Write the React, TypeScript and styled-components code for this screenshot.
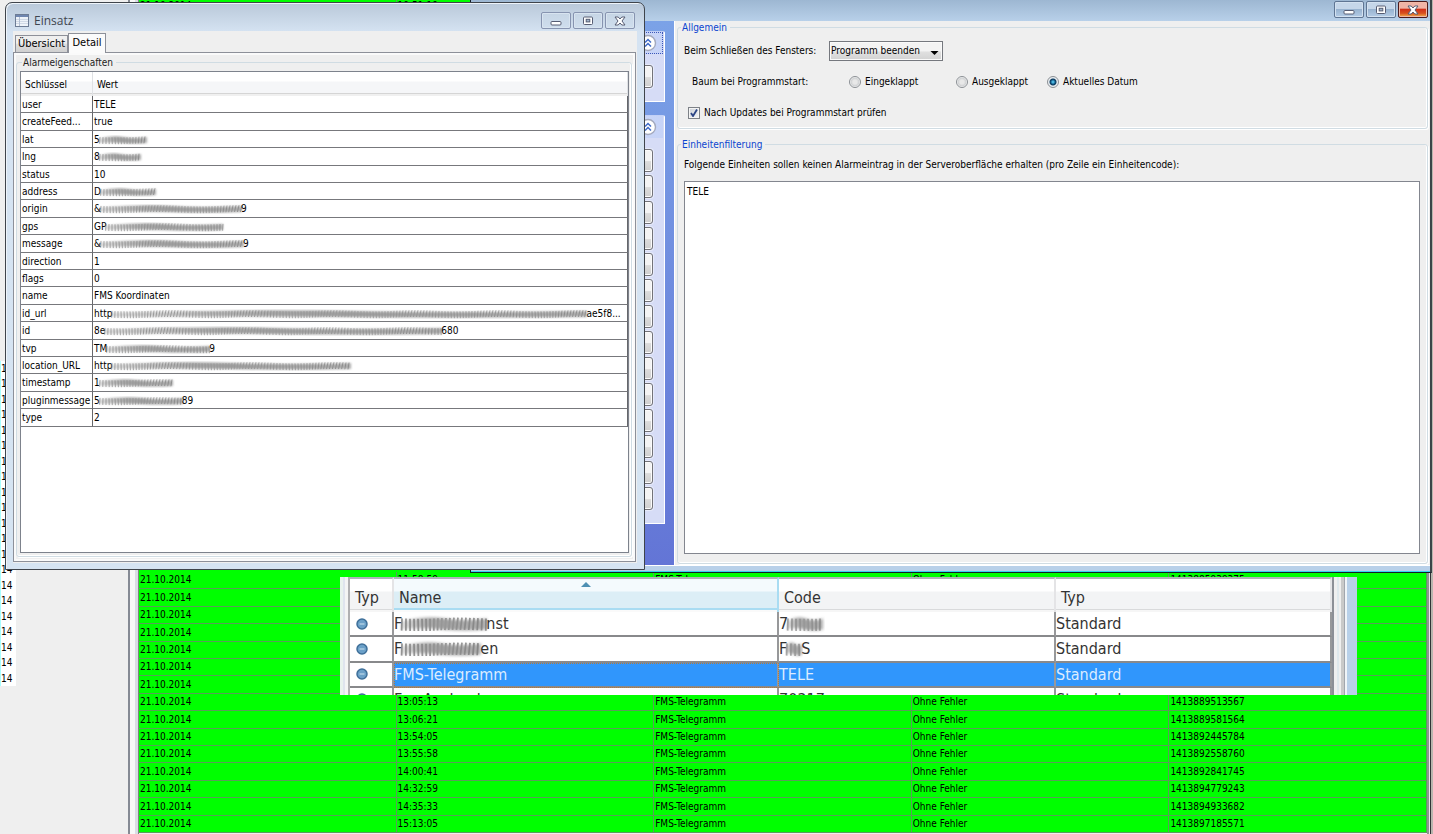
import React from 'react';
import styled, { createGlobalStyle, css } from 'styled-components';

const GlobalStyle = createGlobalStyle`
  *, *::before, *::after { box-sizing: border-box; }
  body {
    margin: 0;
    background: #efefef;
    color: #000;
    font: 10px/14px "DejaVu Sans Condensed", "DejaVu Sans", Tahoma, sans-serif;
  }
  button, input, select, textarea { font: inherit; color: inherit; margin: 0; }
`;

const Desktop = styled.main`
  position: relative;
  display: flex;
  height: 100vh;
  overflow: hidden;
`;

/* ---------- background application ---------- */

const TreePane = styled.aside`
  flex: none;
  width: 128px;
  padding-top: 361px;
`;

const TreeList = styled.ul`
  list-style: none;
  margin: 0;
  padding: 0;
  width: 16px;
  background: #fff;
  border-left: 1px solid #a8ffff;
`;

const TreeItem = styled.li`
  height: 15px;
  line-height: 15px;
  &:nth-child(2n) { height: 16px; }
`;

const Splitter = styled.div`
  flex: none;
  width: 10px;
  border-left: 2px solid #858a94;
  background: linear-gradient(to right, #f8f8f8 0 5px, #d9dde3 5px 8px);
`;

const LogPane = styled.section`
  flex: 1;
  min-width: 0;
  border-left: 1px solid #7d837d;
  margin-top: -3px;
`;

const RightEdge = styled.div`
  flex: none;
  width: 6px;
  background: linear-gradient(to right, #8f9490 0 2px, #e8e8e8 2px 3px, #303436 3px 4px, #b9b6ae 4px 6px);
`;

const LogTable = styled.table`
  width: 100%;
  table-layout: fixed;
  border-collapse: separate;
  border-spacing: 0;
  background: #00ff00;
`;

const LogCell = styled.td`
  padding: 0 1px;
  height: 17px;
  line-height: 14px;
  white-space: nowrap;
  overflow: hidden;
  border-bottom: 1px solid #5b9c5b;
  border-right: 1px solid #5b9c5b;
`;

const LogRow = styled.tr`
  &:nth-child(5n + 1) > td,
  &:nth-child(5n + 4) > td { height: 18px; }
`;

const LogSpacer = styled.td`
  height: 557px;
  padding: 0;
`;

/* ---------- window chrome ---------- */

const windowButton = css`
  display: flex;
  align-items: center;
  justify-content: center;
  width: 30px;
  height: 17px;
  padding: 0;
  border-radius: 2px;
`;

const WindowButton = styled.button<{ $look: 'active' | 'inactive' | 'close' }>`
  ${windowButton}
  ${p => p.$look === 'inactive' && css`
    border: 1px solid #8794b0;
    background: linear-gradient(#c6d5e5, #cfdeed);
    box-shadow: inset 0 0 0 1px #d8e4f0;
  `}
  ${p => p.$look === 'active' && css`
    border: 1px solid #5f7593;
    background: linear-gradient(#c5d6e9 0 45%, #98b3d0 50%, #b4cce6);
    box-shadow: inset 0 0 0 1px #d3e1f0;
  `}
  ${p => p.$look === 'close' && css`
    border: 1px solid #4b1a1c;
    background: linear-gradient(#f0b3a6 0 40%, #d0321a 50%, #d8501f 75%, #f3b64e);
    box-shadow: inset 0 0 0 1px #f1b9a8;
  `}
`;

const ButtonStrip = styled.div`
  display: flex;
  gap: 2px;
  margin-left: auto;
`;

const MinimizeIcon = () => (
  <svg width="12" height="12" viewBox="0 0 12 12">
    <rect x="1" y="6.500" width="10" height="3.500" rx="1" fill="#fff" stroke="#565c72" />
  </svg>
);
const MaximizeIcon = () => (
  <svg width="12" height="12" viewBox="0 0 12 12">
    <rect x="1.500" y="2" width="9" height="7.500" rx="1" fill="#fff" stroke="#565c72" />
    <rect x="4.200" y="4.300" width="3.600" height="2.600" fill="#9fb4cc" stroke="#565c72" />
  </svg>
);
const CloseIcon = () => (
  <svg width="12" height="12" viewBox="0 0 12 12">
    <path d="M1 2h3.200L6 4l1.800-2H11L8 6l3 4H7.800L6 8l-1.800 2H1l3-4z" fill="#fff" stroke="#565c72" strokeLinejoin="round" />
  </svg>
);

const WindowControls = ({ active }: { active?: boolean }) => (
  <ButtonStrip>
    <WindowButton type="button" aria-label="Minimieren" $look={active ? 'active' : 'inactive'}><MinimizeIcon /></WindowButton>
    <WindowButton type="button" aria-label="Maximieren" $look={active ? 'active' : 'inactive'}><MaximizeIcon /></WindowButton>
    <WindowButton type="button" aria-label="Schließen" $look={active ? 'close' : 'inactive'}><CloseIcon /></WindowButton>
  </ButtonStrip>
);

/* ---------- settings window ---------- */

const SettingsWindow = styled.section`
  position: absolute;
  left: 470px;
  right: 1px;
  top: 0;
  background: #b8d0e9;
  border: 1px solid #141c24;
  border-width: 0 2px 1px 1px;
  border-right-color: #3b4548;
`;

const SettingsTitle = styled.header`
  display: flex;
  height: 21px;
  padding: 1px 2px 3px 8px;
  background: linear-gradient(#9db7d2, #b8d0e9);
`;

const SettingsBody = styled.div`
  display: flex;
  border-bottom: 1px solid #fff;
`;

const SettingsBottom = styled.div`
  height: 6px;
  border-bottom: 1px solid #35d4f3;
`;

const TaskPane = styled.nav`
  flex: none;
  width: 203px;
  padding: 10px 9px 0 12px;
  display: flex;
  flex-direction: column;
  gap: 13px;
  background: linear-gradient(#7ba2e7, #6375d6);
`;

const TaskGroup = styled.section`
  border: 1px solid #fff;
  border-top-color: #c3d0f6;
  border-radius: 2px 2px 0 0;
  background: #d6dcf6;
`;

const TaskHeader = styled.header<{ $focused?: boolean }>`
  display: flex;
  justify-content: flex-end;
  align-items: center;
  height: 22px;
  padding: 0 6px 0 0;
  margin: 0 1px 0 0;
  background: linear-gradient(to right, #e8edfc, #c6d3f7);
  outline: ${p => (p.$focused ? '1px dotted #3b56b8' : 'none')};
  outline-offset: -1px;
`;

const ChevronButton = styled.button`
  width: 18px;
  height: 18px;
  padding: 0;
  border: 0;
  background: none;
  & > svg { display: block; }
`;

const TaskButtons = styled.div`
  display: flex;
  flex-direction: column;
  gap: 3px;
  padding: 11px 11px 13px;
`;

const TaskButton = styled.button`
  height: 23px;
  padding: 0;
  border: 1px solid #737378;
  border-radius: 3px;
  background: linear-gradient(#f4f4f4 0 50%, #dcdcdc 55%, #cfcfcf);
  box-shadow: inset 0 0 0 1px #fbfbfb, 0 0 0 1px #e6eafa;
`;

const Chevrons = () => (
  <svg width="18" height="18" viewBox="0 0 18 18">
    <circle cx="9" cy="9" r="7.500" fill="#fff" stroke="#a3a9bd" strokeWidth="1.400" />
    <path d="M6 8.500l3-3 3 3M6 12.500l3-3 3 3" fill="none" stroke="#3f6bc8" strokeWidth="1.500" />
  </svg>
);

const SettingsPane = styled.form`
  flex: 1;
  min-width: 0;
  display: flex;
  flex-direction: column;
  gap: 9px;
  padding: 0 2px 1px;
  background: #efefef;
  border-left: 1px solid #fff;
`;

const Group = styled.fieldset`
  margin: 0;
  min-width: 0;
  padding: 0 7px 0 6px;
  border: 1px solid #d0dce3;
  border-radius: 3px;
  box-shadow: inset 0 -1px 0 #fff, inset -1px 0 0 #fff, 1px 1px 0 #fff;
`;

const Legend = styled.legend<{ $accent?: boolean }>`
  padding: 0 3px 0 1px;
  margin-left: -3px;
  line-height: 13px;
  color: ${p => (p.$accent ? '#0b45d0' : '#222')};
`;

const FormRow = styled.div<{ $indent?: boolean }>`
  display: flex;
  align-items: center;
  height: 31px;
  padding-left: ${p => (p.$indent ? '8px' : '0')};
`;

const FormRows = styled.div`
  padding-top: 1px;
`;

const RowLabel = styled.label`
  width: 145px;
`;

const RadioCaption = styled.span`
  width: 157px;
`;

const SelectBox = styled.div`
  position: relative;
  width: 114px;
  & > svg { position: absolute; right: 4px; top: 9px; pointer-events: none; }
`;

const Select = styled.select`
  appearance: none;
  display: block;
  width: 100%;
  height: 20px;
  padding: 0 0 0 1px;
  border: 1px solid #75787e;
  border-radius: 0;
  background: linear-gradient(#f3f3f3 0 50%, #e0e0e0 55%, #d2d2d2);
  box-shadow: inset 0 0 0 1px #fafafa;
`;

const RadioLabel = styled.label<{ $width: number }>`
  display: flex;
  align-items: center;
  gap: 4px;
  width: ${p => p.$width}px;
`;

const Radio = styled.input`
  appearance: none;
  width: 12px;
  height: 12px;
  border: 1px solid #8b8f94;
  border-radius: 50%;
  background: radial-gradient(circle, #e8e8e8 0 2px, #cfd1d3 4px, #fafafa 5px);
  &:checked {
    background: radial-gradient(circle at 50% 50%, #49b4dd 0 1px, #145d8c 2px, #0d3a5c 3px, #e9eef2 4px);
  }
`;

const CheckLabel = styled.label`
  display: flex;
  align-items: center;
  gap: 4px;
  padding-left: 4px;
`;

const CheckWrap = styled.span`
  position: relative;
  display: flex;
  & > svg { position: absolute; left: 2px; top: 2px; pointer-events: none; }
`;

const Checkbox = styled.input`
  appearance: none;
  width: 12px;
  height: 12px;
  border: 1px solid #7d8187;
  background: linear-gradient(135deg, #ccd1d8, #f4f5f7);
  box-shadow: inset 0 0 0 1px #f4f4f4;
`;

const FilterLabel = styled.label`
  display: block;
  padding: 7px 0 9px;
`;

const FilterArea = styled.textarea`
  display: block;
  width: 100%;
  height: 373px;
  margin-bottom: 9px;
  padding: 3px 2px;
  border: 1px solid #83868f;
  border-radius: 0;
  background: #fff;
  resize: none;
  outline: none;
`;

/* ---------- detail window ---------- */

const DetailWindow = styled.section`
  position: absolute;
  left: 5px;
  top: 2px;
  width: 640px;
  padding: 0 7px 6px;
  border: 1px solid #3f444b;
  border-radius: 7px 7px 0 0;
  background: linear-gradient(#b9c8d9, #d5e3f2 29px, #d6e4f2);
  box-shadow: inset 1px 1px 0 #eef4fa;
`;

const DetailTitle = styled.header`
  display: flex;
  align-items: flex-start;
  height: 28px;
  padding: 9px 2px 0;
`;

const Title = styled.h1`
  margin: 0 0 0 5px;
  font: 12px/17px "Open Sans", "Segoe UI", sans-serif;
  color: #3f4650;
`;

const AppIcon = () => (
  <svg width="14" height="17" viewBox="0 0 14 17">
    <rect x=".5" y="2.500" width="13" height="12" fill="#eef3f9" stroke="#6d7c95" />
    <path d="M1 4h12" stroke="#6f86b0" strokeWidth="2" />
    <path d="M1 7.500h12M1 9.500h12M1 11.500h12" stroke="#d0d9e6" />
    <path d="M4.500 5v9" stroke="#b3c0d4" />
  </svg>
);

const Client = styled.div`
  background: #efefef;
  padding: 2px 1px 1px 0;
`;

const TabList = styled.div`
  display: flex;
  align-items: flex-end;
  padding-left: 2px;
`;

const Tab = styled.button<{ $selected?: boolean }>`
  position: relative;
  padding: 0 4px;
  height: 17px;
  border: 1px solid #8d9099;
  border-bottom: 0;
  background: linear-gradient(#efefef 0 45%, #dedede 50%, #d0d0d0);
  font-size: 11px;
  width: 53px;
  white-space: nowrap;
  display: flex;
  justify-content: center;
  align-items: center;
  ${p => p.$selected && css`
    height: 20px;
    width: 38px;
    margin-bottom: -1px;
    padding-bottom: 2px;
    background: #fbfbfb;
  `}
`;

const TabPanel = styled.div`
  border: 1px solid #8d9099;
  padding: 3px 3px 4px 2px;
  box-shadow: inset 0 0 0 2px #fafafa;
`;

const DetailGroup = styled(Group)`
  padding: 2px 2px 3px 3px;
  & > legend { margin-left: 2px; }
`;

const ScrollPane = styled.div`
  min-height: 482px;
  border: 1px solid #7d828c;
  background: #fff;
`;

const PropertyTable = styled.table`
  width: 100%;
  table-layout: fixed;
  border-collapse: separate;
  border-spacing: 0;
`;

const PropertyHead = styled.th`
  height: 24px;
  padding: 2px 4px 0;
  font-weight: normal;
  text-align: left;
  border-right: 1px solid #dfe1e4;
  background: linear-gradient(#fff 0 9px, #f5f6f8 10px 21px, #d5d5d5 21px 22px, #f0f0f0 22px);
`;

const PropertyCell = styled.td`
  height: 17px;
  padding: 1px 1px 0;
  line-height: 14px;
  white-space: nowrap;
  overflow: hidden;
  text-overflow: ellipsis;
  border-bottom: 1px solid #77787c;
  border-right: 1px solid #66676b;
`;

const PropertyRow = styled.tr`
  &:nth-child(5n + 2) > td,
  &:nth-child(5n + 4) > td { height: 18px; }
`;

const ValueLine = styled.div`
  display: flex;
  align-items: center;
  height: 14px;
`;

const SmearSvg = styled.svg`
  flex: none;
  margin-left: -3px;
  margin-right: -3px;
`;

/* Grey wiped-over area that hides private values. */
const Smear = ({ width, height = 10, dark = false }: { width: number; height?: number; dark?: boolean }) => {
  const id = React.useId();
  const mid = height / 2;
  const step = height > 12 ? 4 : 3;
  const strokes: string[] = [];
  for (let x = 3; x < width - 1; x += step) {
    const wobble = Math.sin(x / 13);
    const top = height * 0.18 + wobble * 0.6;
    strokes.push(`M${x} ${top.toFixed(1)}l${(-0.6 + wobble).toFixed(1)} ${(height * 0.68).toFixed(1)}`);
  }
  const half = height * 0.3;
  return (
    <SmearSvg width={width} height={height} viewBox={`0 0 ${width} ${height}`} aria-hidden="true">
      <defs>
        <filter id={`${id}b`} x="-5%" y="-60%" width="110%" height="220%">
          <feGaussianBlur stdDeviation={height / 12} />
        </filter>
        <linearGradient id={`${id}g`}>
          <stop offset="0" stopColor="#777" stopOpacity=".25" />
          <stop offset=".3" stopColor="#888" stopOpacity=".7" />
          <stop offset=".5" stopColor="#999" stopOpacity=".95" />
          <stop offset=".7" stopColor="#8a8a8a" stopOpacity=".75" />
          <stop offset="1" stopColor="#777" stopOpacity=".6" />
        </linearGradient>
      </defs>
      <path d={strokes.join('')} stroke={dark ? '#444' : '#666'} strokeWidth={height / 10} opacity=".55" fill="none" />
      <path
        d={`M2 ${mid - half * 0.5}Q${width * 0.3} ${mid - half * 1.6} ${width * 0.5} ${mid - half}T${width - 2} ${mid - half}V${mid + half}Q${width * 0.75} ${mid + half * 1.4} ${width * 0.5} ${mid + half}T2 ${mid + half}z`}
        fill={`url(#${id}g)`}
        filter={`url(#${id}b)`}
      />
    </SmearSvg>
  );
};

/* ---------- enlarged unit list ---------- */

const UnitPanel = styled.section`
  position: absolute;
  left: 340px;
  top: 577px;
  width: 1017px;
  height: 118px;
  overflow: hidden;
  display: flex;
  color: #333;
  font-size: 16px;
  background: #fff;
`;

const PanelEdge = styled.div<{ $side: 'left' | 'right' }>`
  flex: none;
  ${p => p.$side === 'left'
    ? css`width: 10px; background: linear-gradient(to right, #e9f2ee 0 3px, #dfe4ee 3px 5px, #f4f4f4 5px 8px, #b0b0b2 8px 10px);`
    : css`width: 25px; background: linear-gradient(to right, #8c8f96 0 2px, #efefef 2px 5px, #dfe8ec 5px 7px, #efefef 7px 9px, #c9c9c9 9px 12px, #a2a6ad 12px 13px, #f0f4f8 13px 15px, #b8d0e9 15px);`}
`;

const UnitTable = styled.table`
  flex: 1;
  table-layout: fixed;
  border-collapse: separate;
  border-spacing: 0;
  height: 136px;
`;

const UnitHead = styled.th<{ $sorted?: boolean }>`
  position: relative;
  height: 35px;
  padding: 4px 5px 0;
  text-align: left;
  font-weight: normal;
  line-height: 20px;
  border-top: 2px solid #aeb4b8;
  border-right: 2px solid #e4e4e6;
  background: linear-gradient(#fff 0 12px, #f3f4f5 13px 30px, #d9dadb 30px 31px, #f6f6f6 31px);
  ${p => p.$sorted && css`
    border-right-color: #a9dcf2;
    background: linear-gradient(#f4fafd 0 12px, #dceef6 13px 29px, #a9dcf2 29px 31px, #fafafa 31px);
  `}
  & > svg { position: absolute; left: 50%; top: 2px; margin-left: -5px; }
`;

const UnitCell = styled.td<{ $selected?: boolean; $focus?: boolean; $icon?: boolean }>`
  height: 25px;
  padding: ${p => (p.$icon ? '0 0 0 6px' : '0')};
  line-height: 23px;
  white-space: nowrap;
  border-bottom: 2px solid #88898b;
  border-right: 2px solid #97989a;
  ${p => p.$selected && css`
    background: #3096fc;
    color: #dcecff;
  `}
  ${p => p.$focus && css`
    outline: 1px dotted #b57a3a;
    outline-offset: -1px;
  `}
`;

const UnitValue = styled.div`
  display: flex;
  align-items: center;
  height: 23px;
`;

const DotSvg = styled.svg`
  display: block;
`;

const TypeDot = () => (
  <DotSvg width="12" height="12" viewBox="0 0 12 12">
    <circle cx="6" cy="6" r="5" fill="#6ba0c8" stroke="#3e6f99" strokeWidth="1.500" />
    <path d="M3.500 6h5" stroke="#a9cbe2" strokeWidth="1.600" />
  </DotSvg>
);

/* ---------- data ---------- */

type LogEntry = [string, string, string, string, string];
const day = '21.10.2014';
const log = (time: string, stamp: string): LogEntry => [day, time, 'FMS-Telegramm', 'Ohne Fehler', stamp];
const bare: LogEntry = [day, '', '', '', ''];

const logEntries: LogEntry[] = [
  log('11:58:59', '1413885939375'),
  bare, bare, bare, bare, bare, bare,
  log('13:05:13', '1413889513567'),
  log('13:06:21', '1413889581564'),
  log('13:54:05', '1413892445784'),
  log('13:55:58', '1413892558760'),
  log('14:00:41', '1413892841745'),
  log('14:32:59', '1413894779243'),
  log('14:35:33', '1413894933682'),
  log('15:13:05', '1413897185571'),
];

type Property = { key: string; head: string; smear?: number; tail?: string };
const properties: Property[] = [
  { key: 'user', head: 'TELE' },
  { key: 'createFeed...', head: 'true' },
  { key: 'lat', head: '5', smear: 52 },
  { key: 'lng', head: '8', smear: 46 },
  { key: 'status', head: '10' },
  { key: 'address', head: 'D', smear: 60 },
  { key: 'origin', head: '&', smear: 146, tail: '9' },
  { key: 'gps', head: 'GP', smear: 122 },
  { key: 'message', head: '&', smear: 148, tail: '9' },
  { key: 'direction', head: '1' },
  { key: 'flags', head: '0' },
  { key: 'name', head: 'FMS Koordinaten' },
  { key: 'id_url', head: 'http', smear: 480, tail: 'ae5f8...' },
  { key: 'id', head: '8e', smear: 342, tail: '680' },
  { key: 'tvp', head: 'TM', smear: 108, tail: '9' },
  { key: 'location_URL', head: 'http', smear: 244 },
  { key: 'timestamp', head: '1', smear: 78 },
  { key: 'pluginmessage', head: '5', smear: 88, tail: '89' },
  { key: 'type', head: '2' },
];

const LogLine = ({ entry }: { entry: LogEntry }) => (
  <LogRow>{entry.map((text, i) => <LogCell key={i}>{text}</LogCell>)}</LogRow>
);

export default function App() {
  return (
    <>
      <GlobalStyle />
      <Desktop>
        <TreePane>
          <TreeList>
            {Array.from({ length: 21 }, (_, i) => <TreeItem key={i}>14</TreeItem>)}
          </TreeList>
        </TreePane>
        <Splitter />
        <LogPane>
          <LogTable>
            <tbody>
              <LogLine entry={log('10:51:19', '1413881479375')} />
              <tr><LogSpacer colSpan={5} /></tr>
              {logEntries.map((entry, i) => <LogLine key={i} entry={entry} />)}
            </tbody>
          </LogTable>
        </LogPane>
        <RightEdge />

        <SettingsWindow>
          <SettingsTitle><WindowControls active /></SettingsTitle>
          <SettingsBody>
            <TaskPane>
              <TaskGroup>
                <TaskHeader $focused>
                  <ChevronButton type="button" aria-label="Einklappen"><Chevrons /></ChevronButton>
                </TaskHeader>
                <TaskButtons><TaskButton type="button" aria-label="Aktion" /></TaskButtons>
              </TaskGroup>
              <TaskGroup>
                <TaskHeader>
                  <ChevronButton type="button" aria-label="Einklappen"><Chevrons /></ChevronButton>
                </TaskHeader>
                <TaskButtons>
                  {Array.from({ length: 14 }, (_, i) => <TaskButton key={i} type="button" aria-label={`Aktion ${i + 1}`} />)}
                </TaskButtons>
              </TaskGroup>
            </TaskPane>
            <SettingsPane>
              <Group>
                <Legend $accent>Allgemein</Legend>
                <FormRows>
                  <FormRow>
                    <RowLabel htmlFor="close-action">Beim Schließen des Fensters:</RowLabel>
                    <SelectBox>
                      <Select id="close-action" defaultValue="end">
                        <option value="end">Programm beenden</option>
                      </Select>
                      <svg width="9" height="6" viewBox="0 0 9 6"><path d="M.5 1h8L4.500 5z" fill="#000" /></svg>
                    </SelectBox>
                  </FormRow>
                  <FormRow $indent>
                    <RadioCaption>Baum bei Programmstart:</RadioCaption>
                    <RadioLabel $width={107}><Radio type="radio" name="tree" />Eingeklappt</RadioLabel>
                    <RadioLabel $width={91}><Radio type="radio" name="tree" />Ausgeklappt</RadioLabel>
                    <RadioLabel $width={107}><Radio type="radio" name="tree" defaultChecked />Aktuelles Datum</RadioLabel>
                  </FormRow>
                  <FormRow>
                    <CheckLabel>
                      <CheckWrap>
                        <Checkbox type="checkbox" defaultChecked />
                        <svg width="8" height="8" viewBox="0 0 8 8"><path d="M1 4l2 3 4-6.500" fill="none" stroke="#2c4585" strokeWidth="1.800" /></svg>
                      </CheckWrap>
                      Nach Updates bei Programmstart prüfen
                    </CheckLabel>
                  </FormRow>
                </FormRows>
              </Group>
              <Group>
                <Legend $accent>Einheitenfilterung</Legend>
                <FilterLabel htmlFor="unit-filter">
                  Folgende Einheiten sollen keinen Alarmeintrag in der Serveroberfläche erhalten (pro Zeile ein Einheitencode):
                </FilterLabel>
                <FilterArea id="unit-filter" defaultValue="TELE" />
              </Group>
            </SettingsPane>
          </SettingsBody>
          <SettingsBottom />
        </SettingsWindow>

        <UnitPanel>
          <PanelEdge $side="left" />
          <UnitTable>
            <colgroup>
              <col style={{ width: 44 }} />
              <col style={{ width: 385 }} />
              <col style={{ width: 277 }} />
              <col />
            </colgroup>
            <thead>
              <tr>
                <UnitHead>Typ</UnitHead>
                <UnitHead $sorted>
                  Name
                  <svg width="10" height="6" viewBox="0 0 10 6"><path d="M0 6l5-5 5 5z" fill="#4d8fb3" /></svg>
                </UnitHead>
                <UnitHead>Code</UnitHead>
                <UnitHead>Typ</UnitHead>
              </tr>
            </thead>
            <tbody>
              <tr>
                <UnitCell $icon><TypeDot /></UnitCell>
                <UnitCell><UnitValue>F<Smear width={90} height={18} dark />nst</UnitValue></UnitCell>
                <UnitCell><UnitValue>7<Smear width={40} height={18} /></UnitValue></UnitCell>
                <UnitCell>Standard</UnitCell>
              </tr>
              <tr>
                <UnitCell $icon><TypeDot /></UnitCell>
                <UnitCell><UnitValue>F<Smear width={84} height={18} dark />en</UnitValue></UnitCell>
                <UnitCell><UnitValue>F<Smear width={20} height={18} />S</UnitValue></UnitCell>
                <UnitCell>Standard</UnitCell>
              </tr>
              <tr>
                <UnitCell $icon><TypeDot /></UnitCell>
                <UnitCell $selected $focus>FMS-Telegramm</UnitCell>
                <UnitCell $selected>TELE</UnitCell>
                <UnitCell $selected>Standard</UnitCell>
              </tr>
              <tr>
                <UnitCell $icon><TypeDot /></UnitCell>
                <UnitCell>Fax-Ausland</UnitCell>
                <UnitCell>70317</UnitCell>
                <UnitCell>Standard</UnitCell>
              </tr>
            </tbody>
          </UnitTable>
          <PanelEdge $side="right" />
        </UnitPanel>

        <DetailWindow>
          <DetailTitle>
            <AppIcon />
            <Title>Einsatz</Title>
            <WindowControls />
          </DetailTitle>
          <Client>
            <TabList role="tablist">
              <Tab type="button" role="tab" aria-selected={false}>Übersicht</Tab>
              <Tab type="button" role="tab" aria-selected $selected>Detail</Tab>
            </TabList>
            <TabPanel role="tabpanel">
              <DetailGroup>
                <Legend>Alarmeigenschaften</Legend>
                <ScrollPane>
                  <PropertyTable>
                    <colgroup>
                      <col style={{ width: 72 }} />
                      <col />
                    </colgroup>
                    <thead>
                      <tr>
                        <PropertyHead>Schlüssel</PropertyHead>
                        <PropertyHead>Wert</PropertyHead>
                      </tr>
                    </thead>
                    <tbody>
                      {properties.map(p => (
                        <PropertyRow key={p.key}>
                          <PropertyCell>{p.key}</PropertyCell>
                          <PropertyCell>
                            {p.smear
                              ? <ValueLine>{p.head}<Smear width={p.smear} />{p.tail}</ValueLine>
                              : p.head}
                          </PropertyCell>
                        </PropertyRow>
                      ))}
                    </tbody>
                  </PropertyTable>
                </ScrollPane>
              </DetailGroup>
            </TabPanel>
          </Client>
        </DetailWindow>
      </Desktop>
    </>
  );
}
